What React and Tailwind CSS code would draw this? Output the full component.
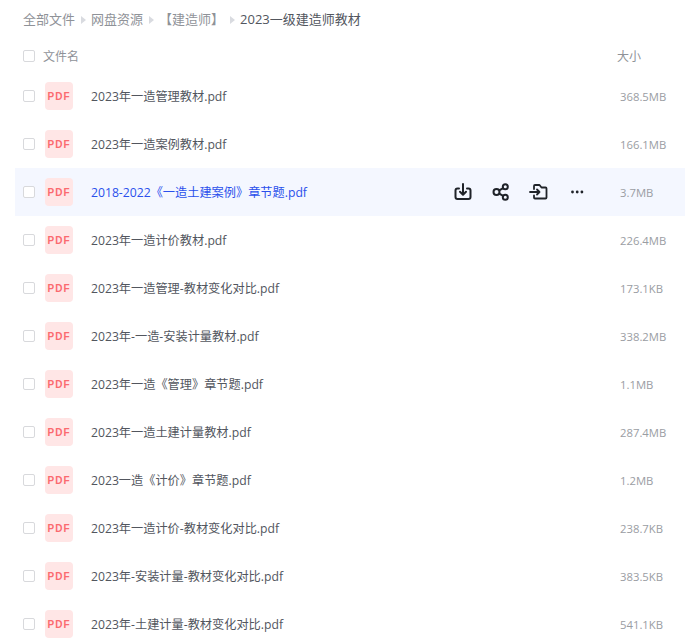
import { useState } from "react";

const FILES = [
  { name: "2023年一造管理教材.pdf", size: "368.5MB" },
  { name: "2023年一造案例教材.pdf", size: "166.1MB" },
  { name: "2018-2022《一造土建案例》章节题.pdf", size: "3.7MB", active: true },
  { name: "2023年一造计价教材.pdf", size: "226.4MB" },
  { name: "2023年一造管理-教材变化对比.pdf", size: "173.1KB" },
  { name: "2023年-一造-安装计量教材.pdf", size: "338.2MB" },
  { name: "2023年一造《管理》章节题.pdf", size: "1.1MB" },
  { name: "2023年一造土建计量教材.pdf", size: "287.4MB" },
  { name: "2023一造《计价》章节题.pdf", size: "1.2MB" },
  { name: "2023年一造计价-教材变化对比.pdf", size: "238.7KB" },
  { name: "2023年-安装计量-教材变化对比.pdf", size: "383.5KB" },
  { name: "2023年-土建计量-教材变化对比.pdf", size: "541.1KB" },
];

const CRUMBS = ["全部文件", "网盘资源", "【建造师】"];

function Caret({ className }) {
  return (
    <svg width="5" height="8" viewBox="0 0 5 8" className={className}>
      <path d="M0 0 L5 4 L0 8 Z" fill="#d9dbe0" />
    </svg>
  );
}

function Checkbox() {
  return <span className="block w-[10px] h-[10px] box-content border border-[#d8d9dc] rounded-[2px] bg-white" />;
}

function ActionIcons() {
  return (
    <div className="flex items-center gap-[18px] text-[#1f2329]">
      {/* download */}
      <svg width="20" height="20" viewBox="0 0 20 20" fill="none" stroke="currentColor" strokeWidth="2" strokeLinecap="round" strokeLinejoin="round">
        <path d="M6 6.500H4.500A2 2 0 0 0 2.500 8.500V15A2 2 0 0 0 4.500 17H15.500A2 2 0 0 0 17.500 15V8.500A2 2 0 0 0 15.500 6.500H14" />
        <path d="M10 2V12.500M7 9.800L10 12.800L13 9.800" />
      </svg>
      {/* share */}
      <svg width="20" height="20" viewBox="0 0 20 20" fill="none" stroke="currentColor" strokeWidth="2">
        <circle cx="5.500" cy="10" r="3" />
        <circle cx="14.300" cy="4.800" r="2.500" />
        <circle cx="14.300" cy="15.200" r="2.500" />
        <path d="M8.200 8.400L12.200 6.100M8.200 11.600L12.200 13.900" />
      </svg>
      {/* move to */}
      <svg width="20" height="20" viewBox="0 0 20 20" fill="none" stroke="currentColor" strokeWidth="1.800" strokeLinecap="round" strokeLinejoin="round">
        <path d="M5 7V4A1 1 0 0 1 6 3H10.500L12.500 5.500H16.500A1 1 0 0 1 17.500 6.500V15.500A1 1 0 0 1 16.500 16.500H6A1 1 0 0 1 5 15.500V13.500" />
        <path d="M1 10H10.500M8 7.500L10.500 10L8 12.500" />
      </svg>
      {/* more */}
      <svg width="20" height="20" viewBox="0 0 20 20" fill="currentColor">
        <circle cx="5.500" cy="10" r="1.400" />
        <circle cx="10.200" cy="10" r="1.400" />
        <circle cx="14.900" cy="10" r="1.400" />
      </svg>
    </div>
  );
}

function FileRow({ file }) {
  return (
    <div className={`flex items-center h-12 ml-[15px] pl-[8px] ${file.active ? "bg-[#f4f7ff]" : ""}`}>
      <Checkbox />
      <div className="ml-[10px] w-7 h-7 rounded-[4px] bg-[#ffe6e6] flex items-center justify-center text-[10px] font-bold tracking-[1px] text-[#fb6a6f] font-['Liberation_Sans',sans-serif]">
        PDF
      </div>
      <div className={`ml-[18px] mt-[2px] flex-1 text-[12.2px] ${file.active ? "text-[#2a50ec]" : "text-[#52565e]"}`}>
        {file.name}
      </div>
      {file.active && (
        <div className="mr-[33px]">
          <ActionIcons />
        </div>
      )}
      <div className="w-[65px] mt-[2px] text-[11.300px] text-[#9a9da3]">{file.size}</div>
    </div>
  );
}

export default function App() {
  const [files] = useState(FILES);

  return (
    <div className="w-[685px] h-[642px] overflow-hidden bg-white font-['Open_Sans','Noto_Sans_CJK_SC',sans-serif]">
      {/* breadcrumb */}
      <div className="flex items-center h-10 pl-[23px] text-[13px] text-[#8f9298]">
        {CRUMBS.map((c) => (
          <div key={c} className="flex items-center">
            <span>{c}</span>
            <Caret className="mx-[5.500px]" />
          </div>
        ))}
        <span className="text-[#52565e]">2023一级建造师教材</span>
      </div>

      {/* table head */}
      <div className="flex items-center h-8 pl-[23px] text-[12px] text-[#8f9298]">
        <Checkbox />
        <span className="ml-[8px] mt-[2px] flex-1">文件名</span>
        <span className="w-[68px] mt-[2px]">大小</span>
      </div>

      {files.map((f) => (
        <FileRow key={f.name} file={f} />
      ))}
    </div>
  );
}
